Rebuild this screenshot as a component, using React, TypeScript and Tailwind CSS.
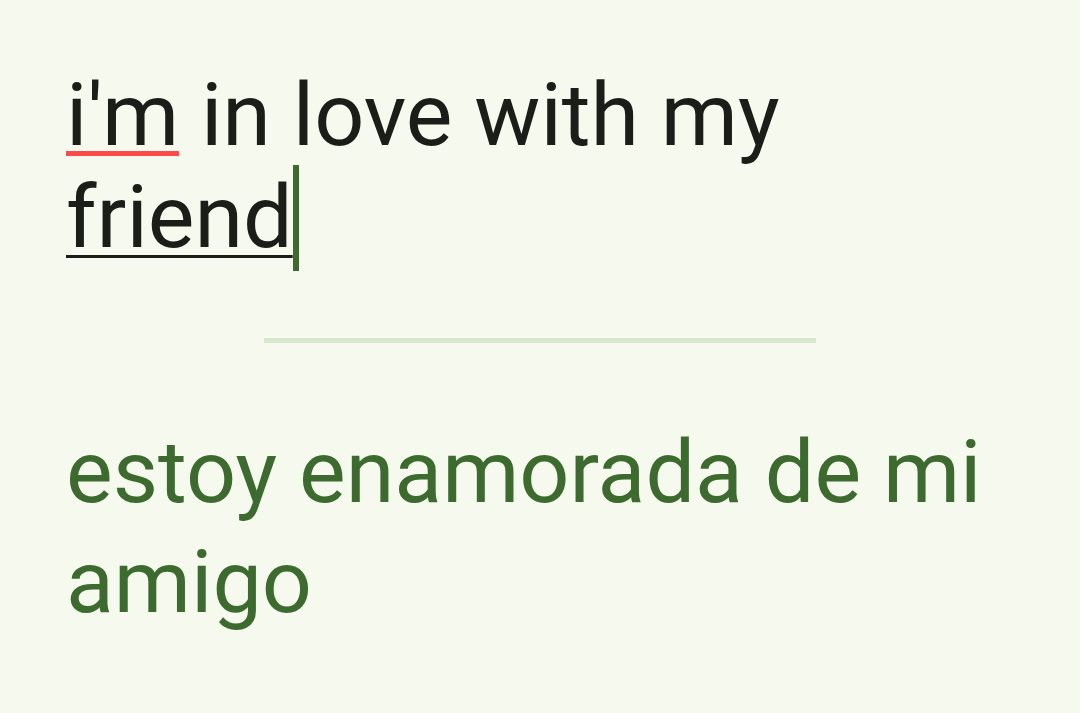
import React from "react";

export default function App() {
  return (
    <div className="w-[1080px] h-[713px] bg-[#f6faee] overflow-hidden" style={{ fontFamily: "Roboto, sans-serif" }}>
      <div className="pl-[66px] pt-[64px]">
        <div className="w-[940px] text-[88px] leading-[102px] text-[#1b1d18]">
          <span className="underline decoration-[#ff4a4a] decoration-[5px] underline-offset-[6px]">i'm</span> in love with my{" "}
          <span className="relative underline decoration-[#1b1d18] decoration-[3px] underline-offset-[8px]">
            friend
            <span className="absolute right-[-6px] top-0 w-[6px] h-[106px] bg-[#3d6b2f]" />
          </span>
        </div>
      </div>
      <div className="flex justify-center mt-[70px]">
        <div className="w-[552px] h-[5px] bg-[#d7e8cc]" />
      </div>
      <div className="pl-[66px] mt-[74px]">
        <div className="w-[940px] text-[88px] leading-[110px] text-[#3d6b2f]">estoy enamorada de mi amigo</div>
      </div>
    </div>
  );
}
